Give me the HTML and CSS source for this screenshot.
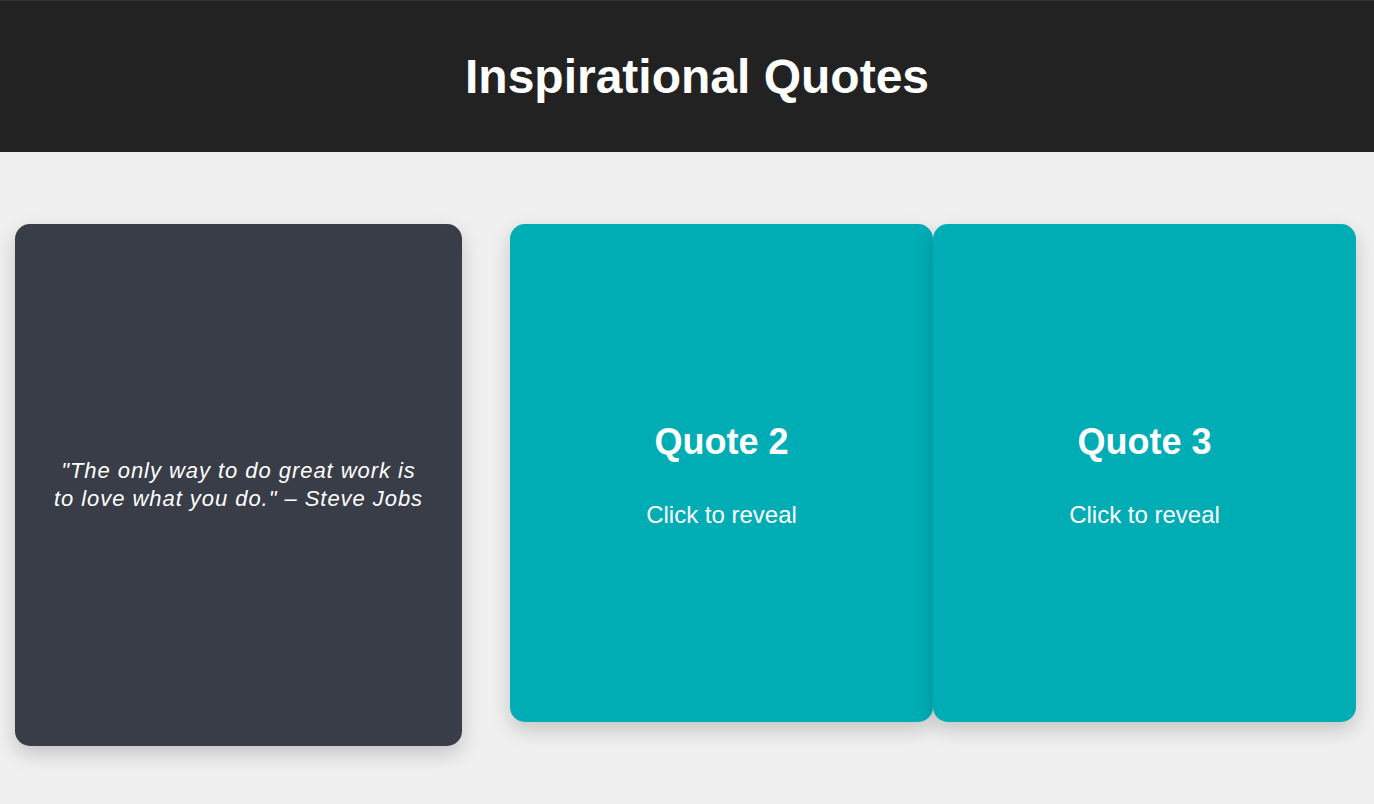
FILE: index.html
```html
<!DOCTYPE html>
<html lang="en">
<head>
<meta charset="utf-8">
<title>Inspirational Quotes</title>
<link rel="stylesheet" href="styles.css">
</head>
<body>
<header class="site-header">
  <h1 class="site-title">Inspirational Quotes</h1>
</header>
<main class="cards">
  <div class="card card-revealed">
    <p class="quote-text">"The only way to do great work is to love what you do." – Steve Jobs</p>
  </div>
  <div class="card card-hidden">
    <h2 class="card-title">Quote 2</h2>
    <p class="card-hint">Click to reveal</p>
  </div>
  <div class="card card-hidden">
    <h2 class="card-title">Quote 3</h2>
    <p class="card-hint">Click to reveal</p>
  </div>
</main>
</body>
</html>
```
FILE: styles.css
```css
html, body {
  margin: 0;
  padding: 0;
}
body {
  background: #f0f0f0;
  font-family: "Liberation Sans", Arial, sans-serif;
  color: #fff;
}
.site-header {
  box-sizing: border-box;
  height: 152px;
  background: #222;
  border-top: 1px solid #353535;
  padding-left: 20px;
  display: flex;
  align-items: center;
  justify-content: center;
}
.site-title {
  margin: 0;
  font-size: 48px;
  line-height: 1.2;
  font-weight: bold;
  color: #fff;
}
.cards {
  display: flex;
  align-items: flex-start;
  padding: 72px 18px 58px 15px;
}
.card {
  box-sizing: border-box;
  border-radius: 15px;
  box-shadow: 0 8px 20px rgba(0, 0, 0, 0.18);
  display: flex;
  flex-direction: column;
  align-items: center;
  justify-content: center;
  text-align: center;
}
.card-revealed {
  width: 447px;
  height: 522px;
  margin-right: 48px;
  background: #393d47;
  padding: 0 36px;
}
.card-hidden {
  width: 423px;
  height: 498px;
  background: #00adb5;
  padding-top: 4px;
}
.quote-text {
  margin: 0;
  font-size: 22px;
  line-height: 28px;
  font-style: italic;
  letter-spacing: 0.95px;
}
.card-title {
  margin: 0;
  font-size: 36px;
  line-height: 1.2;
  font-weight: bold;
}
.card-hint {
  margin: 38px 0 0;
  font-size: 24px;
  line-height: 1.2;
}
```
